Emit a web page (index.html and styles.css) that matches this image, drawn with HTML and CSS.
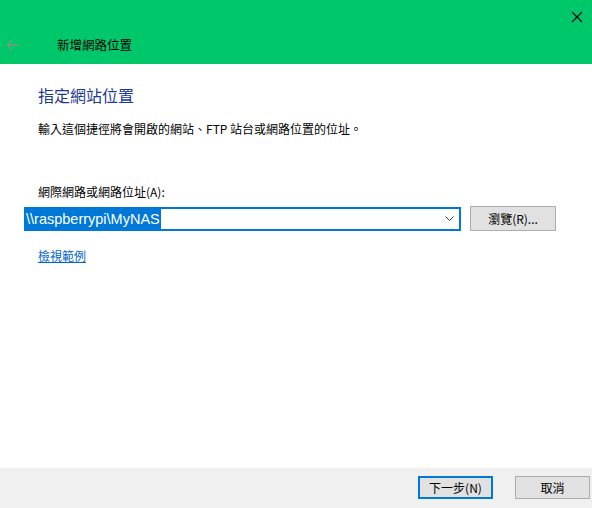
FILE: index.html
```html
<!DOCTYPE html>
<html lang="zh-Hant">
<head>
    <meta charset="UTF-8">
    <title>新增網路位置</title>
    <link rel="stylesheet" href="styles.css">
</head>
<body>
    <div class="wizard">
        <div class="header">
            <div class="close">
                <svg width="12" height="12" viewBox="0 0 12 12"><path d="M1 1L11 11M11 1L1 11" stroke="#000" stroke-width="1.1"/></svg>
            </div>
            <div class="nav">
                <svg class="back" width="14" height="12" viewBox="0 0 14 12"><path d="M13 6H1.5M6 1.5L1.5 6L6 10.5" stroke="#7a9a88" stroke-width="1.3" fill="none"/></svg>
                <span class="caption">新增網路位置</span>
            </div>
        </div>

        <div class="content">
            <h1 class="title">指定網站位置</h1>
            <p class="desc">輸入這個捷徑將會開啟的網站、FTP 站台或網路位置的位址。</p>

            <label class="label">網際網路或網路位址(A):</label>
            <div class="row">
                <div class="combo">
                    <span class="selected">\\raspberrypi\MyNAS</span>
                    <svg class="arrow" width="9" height="5" viewBox="0 0 9 5"><path d="M0.5 0.5L4.5 4.5L8.5 0.5" stroke="#444" fill="none"/></svg>
                </div>
                <button class="btn browse">瀏覽(R)...</button>
            </div>
            <a class="link" href="#">檢視範例</a>
        </div>

        <div class="footer">
            <button class="btn primary">下一步(N)</button>
            <button class="btn">取消</button>
        </div>
    </div>
</body>
</html>
```

FILE: styles.css
```css
body {
    margin: 0;
    font-family: "Noto Sans CJK TC", "Liberation Sans", sans-serif;
    font-size: 12px;
    color: #000;
    background: #fff;
}

.wizard {
    width: 592px;
    height: 508px;
    display: flex;
    flex-direction: column;
}

.header {
    height: 64px;
    background: #00c86a;
    position: relative;
}

.close {
    position: absolute;
    top: 9px;
    right: 9px;
    width: 12px;
    height: 12px;
}

.nav {
    display: flex;
    align-items: center;
    padding: 37px 0 0 6px;
}

.back {
    margin-right: 37px;
}

.caption {
    font-size: 12.5px;
    line-height: 16px;
}

.content {
    flex: 1;
    padding: 20px 0 0 38px;
}

.title {
    margin: 0;
    font-size: 16px;
    font-weight: normal;
    color: #1f3a93;
    line-height: 22px;
}

.desc {
    margin: 14px 0 0;
    line-height: 18px;
}

.label {
    display: block;
    margin-top: 45px;
    line-height: 18px;
}

.row {
    display: flex;
    align-items: center;
    margin-top: 5px;
    margin-left: -14px;
}

.combo {
    width: 433px;
    height: 20px;
    border: 2px solid #0078d7;
    display: flex;
    align-items: center;
    justify-content: space-between;
}

.selected {
    background: #0078d7;
    color: #fff;
    font-family: "Liberation Sans", sans-serif;
    font-size: 14.5px;
    line-height: 20px;
    padding: 0 1px 0 0;
}

.arrow {
    margin-right: 5px;
}

.btn {
    font-family: "Noto Sans CJK TC", "Liberation Sans", sans-serif;
    font-size: 12px;
    width: 75px;
    height: 23px;
    padding: 0;
    background: #e1e1e1;
    border: 1px solid #adadad;
    color: #000;
}

.browse {
    width: 86px;
    height: 25px;
    margin-left: 9px;
}

.primary {
    border: 2px solid #0078d7;
}

.link {
    display: inline-block;
    margin-top: 16px;
    color: #0066cc;
    line-height: 18px;
}

.footer {
    height: 40px;
    background: #f0f0f0;
    display: flex;
    justify-content: flex-end;
    align-items: flex-start;
    padding: 8px 2px 0 0;
    gap: 22px;
    box-sizing: border-box;
}
```
